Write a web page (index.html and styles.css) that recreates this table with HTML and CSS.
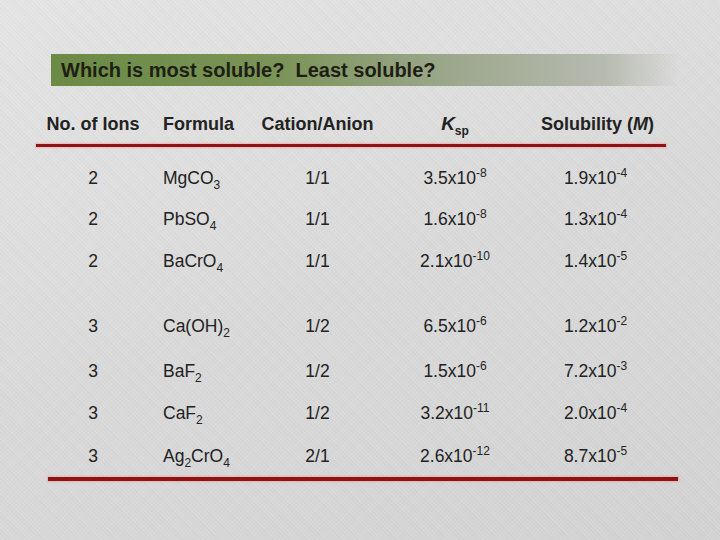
FILE: index.html
```html
<!DOCTYPE html>
<html>
<head>
<meta charset="utf-8">
<link rel="stylesheet" href="styles.css">
</head>
<body>
<div class="slide">
  <div class="title">Which is most soluble?&nbsp; Least soluble?</div>
  <div class="table">
    <div class="row head">
      <div class="c1">No. of Ions</div>
      <div class="c2">Formula</div>
      <div class="c3">Cation/Anion</div>
      <div class="c4"><i>K</i><sub>sp</sub></div>
      <div class="c5">Solubility (<i>M</i>)</div>
    </div>
    <div class="rule top"></div>
    <div class="row r1">
      <div class="c1">2</div><div class="c2">MgCO<sub>3</sub></div><div class="c3">1/1</div>
      <div class="c4">3.5x10<sup>-8</sup></div><div class="c5">1.9x10<sup>-4</sup></div>
    </div>
    <div class="row r2">
      <div class="c1">2</div><div class="c2">PbSO<sub>4</sub></div><div class="c3">1/1</div>
      <div class="c4">1.6x10<sup>-8</sup></div><div class="c5">1.3x10<sup>-4</sup></div>
    </div>
    <div class="row r3">
      <div class="c1">2</div><div class="c2">BaCrO<sub>4</sub></div><div class="c3">1/1</div>
      <div class="c4">2.1x10<sup>-10</sup></div><div class="c5">1.4x10<sup>-5</sup></div>
    </div>
    <div class="row r4">
      <div class="c1">3</div><div class="c2">Ca(OH)<sub>2</sub></div><div class="c3">1/2</div>
      <div class="c4">6.5x10<sup>-6</sup></div><div class="c5">1.2x10<sup>-2</sup></div>
    </div>
    <div class="row r5">
      <div class="c1">3</div><div class="c2">BaF<sub>2</sub></div><div class="c3">1/2</div>
      <div class="c4">1.5x10<sup>-6</sup></div><div class="c5">7.2x10<sup>-3</sup></div>
    </div>
    <div class="row r6">
      <div class="c1">3</div><div class="c2">CaF<sub>2</sub></div><div class="c3">1/2</div>
      <div class="c4">3.2x10<sup>-11</sup></div><div class="c5">2.0x10<sup>-4</sup></div>
    </div>
    <div class="row r7">
      <div class="c1">3</div><div class="c2">Ag<sub>2</sub>CrO<sub>4</sub></div><div class="c3">2/1</div>
      <div class="c4">2.6x10<sup>-12</sup></div><div class="c5">8.7x10<sup>-5</sup></div>
    </div>
    <div class="rule bottom"></div>
  </div>
</div>
</body>
</html>
```
FILE: styles.css
```css
html, body {
  margin: 0;
  padding: 0;
}
body {
  width: 720px;
  height: 540px;
  overflow: hidden;
  font-family: "Liberation Sans", Arial, sans-serif;
  color: #222;
}
.slide {
  width: 720px;
  height: 540px;
  box-sizing: border-box;
  padding-top: 54px;
  background:
    repeating-linear-gradient(45deg, rgba(255,255,255,0.06) 0 1px, rgba(0,0,0,0.015) 1px 2px, transparent 2px 3px),
    repeating-linear-gradient(-45deg, rgba(255,255,255,0.05) 0 1px, transparent 1px 3px),
    linear-gradient(160deg, #e4e4e4 0%, #d9d9d9 50%, #d2d2d2 100%);
}
.title {
  margin-left: 51px;
  width: 629px;
  height: 32px;
  box-sizing: border-box;
  padding-left: 10px;
  line-height: 33px;
  font-size: 20px;
  font-weight: bold;
  color: #1e1e14;
  background: linear-gradient(90deg, #6b8a45 0%, #7a9356 35%, #9aa68a 62%, #b7bab0 88%, rgba(205,206,200,0) 100%);
}
.table {
  margin-top: 27px;
}
.row {
  display: grid;
  grid-template-columns: 114px 100px 135px 140px 141px;
  margin-left: 36px;
  align-items: center;
  font-size: 17.5px;
}
.row > div { white-space: nowrap; }
.c1, .c3, .c4, .c5 { text-align: center; }
.c2 { padding-left: 13px; }
.head {
  font-weight: bold;
  font-size: 18px;
  height: 18px;
}
.head .c4 { font-size: 19px; }
.head .c4 sub { font-size: 12px; font-weight: bold; }
.head .c5 { padding-left: 4px; }
sub, sup {
  font-size: 12px;
  line-height: 0;
  position: relative;
  vertical-align: baseline;
}
sub { top: 5px; }
sup { top: -7px; }
.rule {
  height: 4px;
  background: #8c1414;
  box-shadow: 0 0 2px 1px rgba(240,150,150,0.55);
}
.rule.top {
  margin: 13px 0 0 36px;
  width: 630px;
  height: 3px;
}
.rule.bottom {
  margin: 11px 0 0 48px;
  width: 630px;
}
.r1 { height: 20px; margin-top: 21px; }
.r2 { height: 20px; margin-top: 21px; }
.r3 { height: 20px; margin-top: 22px; }
.r4 { height: 20px; margin-top: 45px; }
.r5 { height: 20px; margin-top: 25px; }
.r6 { height: 20px; margin-top: 22px; }
.r7 { height: 20px; margin-top: 23px; }
```
